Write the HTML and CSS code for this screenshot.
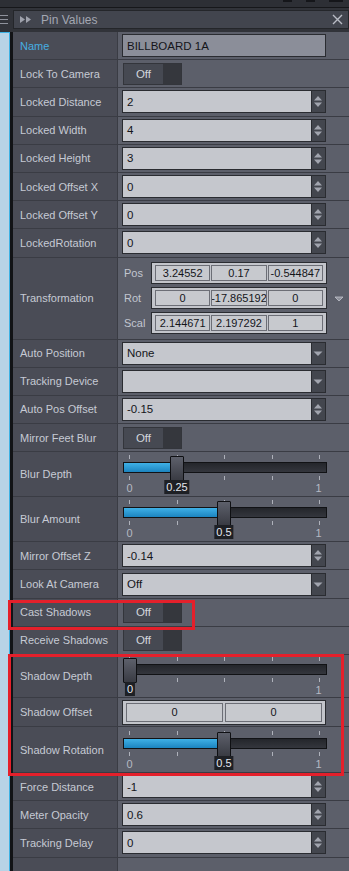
FILE: index.html
```html
<!DOCTYPE html>
<html lang="en">
<head>
  <meta charset="UTF-8">
  <title>Pin Values</title>
  <link rel="stylesheet" href="styles.css">
</head>
<body>
  <div class="topbar">
    <span class="tb-mark"></span>
    <span class="tb-mark"></span>
    <span class="tb-mark wide"></span>
  </div>

  <div class="head">
    <div class="menu-btn">
      <span></span><span></span><span></span>
    </div>
    <div class="title-bar">
      <svg class="dock-icon" width="12" height="7" viewBox="0 0 12 7"><polygon points="0,0 5,3.5 0,7" /><polygon points="6,0 11,3.5 6,7" /></svg>
      <span class="title">Pin Values</span>
      <svg class="close-icon" width="11" height="11" viewBox="0 0 11 11"><path d="M1 1 L10 10 M10 1 L1 10" /></svg>
    </div>
  </div>

  <div class="main">
    <div class="strip"></div>
    <div class="divider"></div>

    <div class="grid">
      <div class="row">
        <div class="label active">Name</div>
        <div class="value"><div class="field name-field">BILLBOARD 1A</div></div>
      </div>

      <div class="row">
        <div class="label">Lock To Camera</div>
        <div class="value"><div class="toggle"><span class="toggle-on">Off</span><span class="toggle-off"></span></div></div>
      </div>

      <div class="row">
        <div class="label">Locked Distance</div>
        <div class="value"><div class="spin"><div class="field">2</div><div class="spin-btn"><svg width="12" height="21" viewBox="0 0 12 21"><polygon points="2,9.5 6,5 10,9.5" /><polygon points="2,11.5 6,16 10,11.5" /></svg></div></div></div>
      </div>

      <div class="row">
        <div class="label">Locked Width</div>
        <div class="value"><div class="spin"><div class="field">4</div><div class="spin-btn"><svg width="12" height="21" viewBox="0 0 12 21"><polygon points="2,9.5 6,5 10,9.5" /><polygon points="2,11.5 6,16 10,11.5" /></svg></div></div></div>
      </div>

      <div class="row">
        <div class="label">Locked Height</div>
        <div class="value"><div class="spin"><div class="field">3</div><div class="spin-btn"><svg width="12" height="21" viewBox="0 0 12 21"><polygon points="2,9.5 6,5 10,9.5" /><polygon points="2,11.5 6,16 10,11.5" /></svg></div></div></div>
      </div>

      <div class="row">
        <div class="label">Locked Offset X</div>
        <div class="value"><div class="spin"><div class="field">0</div><div class="spin-btn"><svg width="12" height="21" viewBox="0 0 12 21"><polygon points="2,9.5 6,5 10,9.5" /><polygon points="2,11.5 6,16 10,11.5" /></svg></div></div></div>
      </div>

      <div class="row">
        <div class="label">Locked Offset Y</div>
        <div class="value"><div class="spin"><div class="field">0</div><div class="spin-btn"><svg width="12" height="21" viewBox="0 0 12 21"><polygon points="2,9.5 6,5 10,9.5" /><polygon points="2,11.5 6,16 10,11.5" /></svg></div></div></div>
      </div>

      <div class="row">
        <div class="label">LockedRotation</div>
        <div class="value"><div class="spin"><div class="field">0</div><div class="spin-btn"><svg width="12" height="21" viewBox="0 0 12 21"><polygon points="2,9.5 6,5 10,9.5" /><polygon points="2,11.5 6,16 10,11.5" /></svg></div></div></div>
      </div>

      <div class="row row-transform">
        <div class="label">Transformation</div>
        <div class="value transform">
          <div class="vec-list">
            <div class="vec-row">
              <span class="vec-name">Pos</span>
              <div class="vec"><span class="cell">3.24552</span><span class="cell">0.17</span><span class="cell">-0.544847</span></div>
            </div>
            <div class="vec-row">
              <span class="vec-name">Rot</span>
              <div class="vec"><span class="cell">0</span><span class="cell">-17.865192</span><span class="cell">0</span></div>
            </div>
            <div class="vec-row">
              <span class="vec-name">Scal</span>
              <div class="vec"><span class="cell">2.144671</span><span class="cell">2.197292</span><span class="cell">1</span></div>
            </div>
          </div>
          <svg class="expand" width="10" height="6" viewBox="0 0 10 6"><polygon points="1,1 9,1 5,5" /></svg>
        </div>
      </div>

      <div class="row">
        <div class="label">Auto Position</div>
        <div class="value"><div class="spin"><div class="field">None</div><div class="spin-btn"><svg width="12" height="21" viewBox="0 0 12 21"><polygon points="1.5,8.5 10.5,8.5 6,13" /></svg></div></div></div>
      </div>

      <div class="row">
        <div class="label">Tracking Device</div>
        <div class="value"><div class="spin"><div class="field"></div><div class="spin-btn"><svg width="12" height="21" viewBox="0 0 12 21"><polygon points="1.5,8.5 10.5,8.5 6,13" /></svg></div></div></div>
      </div>

      <div class="row">
        <div class="label">Auto Pos Offset</div>
        <div class="value"><div class="spin"><div class="field">-0.15</div><div class="spin-btn"><svg width="12" height="21" viewBox="0 0 12 21"><polygon points="2,9.5 6,5 10,9.5" /><polygon points="2,11.5 6,16 10,11.5" /></svg></div></div></div>
      </div>

      <div class="row">
        <div class="label">Mirror Feet Blur</div>
        <div class="value"><div class="toggle"><span class="toggle-on">Off</span><span class="toggle-off"></span></div></div>
      </div>

      <div class="row row-slider">
        <div class="label">Blur Depth</div>
        <div class="value">
          <div class="slider">
            <div class="ticks"><i></i><i></i><i></i><i></i><i></i></div>
            <div class="track">
              <div class="fill" style="width: 53px"></div>
              <div class="thumb" style="left: 46px"></div>
            </div>
            <div class="ticks"><i></i><i></i><i></i><i></i><i></i></div>
            <div class="scale"><span class="min">0</span><span class="max">1</span><span class="current" style="left: 54px">0.25</span></div>
          </div>
        </div>
      </div>

      <div class="row row-slider">
        <div class="label">Blur Amount</div>
        <div class="value">
          <div class="slider">
            <div class="ticks"><i></i><i></i><i></i><i></i><i></i></div>
            <div class="track">
              <div class="fill" style="width: 100px"></div>
              <div class="thumb" style="left: 93px"></div>
            </div>
            <div class="ticks"><i></i><i></i><i></i><i></i><i></i></div>
            <div class="scale"><span class="min">0</span><span class="max">1</span><span class="current" style="left: 101px">0.5</span></div>
          </div>
        </div>
      </div>

      <div class="row">
        <div class="label">Mirror Offset Z</div>
        <div class="value"><div class="spin"><div class="field">-0.14</div><div class="spin-btn"><svg width="12" height="21" viewBox="0 0 12 21"><polygon points="2,9.5 6,5 10,9.5" /><polygon points="2,11.5 6,16 10,11.5" /></svg></div></div></div>
      </div>

      <div class="row">
        <div class="label">Look At Camera</div>
        <div class="value"><div class="spin"><div class="field">Off</div><div class="spin-btn"><svg width="12" height="21" viewBox="0 0 12 21"><polygon points="1.5,8.5 10.5,8.5 6,13" /></svg></div></div></div>
      </div>

      <div class="row">
        <div class="label">Cast Shadows</div>
        <div class="value"><div class="toggle"><span class="toggle-on">Off</span><span class="toggle-off"></span></div></div>
      </div>

      <div class="row">
        <div class="label">Receive Shadows</div>
        <div class="value"><div class="toggle"><span class="toggle-on">Off</span><span class="toggle-off"></span></div></div>
      </div>

      <div class="row row-slider short">
        <div class="label">Shadow Depth</div>
        <div class="value">
          <div class="slider">
            <div class="ticks"><i></i><i></i><i></i><i></i><i></i></div>
            <div class="track">
              <div class="fill" style="width: 0px"></div>
              <div class="thumb" style="left: -1px"></div>
            </div>
            <div class="ticks"><i></i><i></i><i></i><i></i><i></i></div>
            <div class="scale"><span class="min">0</span><span class="max">1</span><span class="current" style="left: 7px">0</span></div>
          </div>
        </div>
      </div>

      <div class="row row-vec2">
        <div class="label">Shadow Offset</div>
        <div class="value">
          <div class="vec vec2"><span class="cell">0</span><span class="cell">0</span></div>
        </div>
      </div>

      <div class="row row-slider tall">
        <div class="label">Shadow Rotation</div>
        <div class="value">
          <div class="slider">
            <div class="ticks"><i></i><i></i><i></i><i></i><i></i></div>
            <div class="track">
              <div class="fill" style="width: 100px"></div>
              <div class="thumb" style="left: 93px"></div>
            </div>
            <div class="ticks"><i></i><i></i><i></i><i></i><i></i></div>
            <div class="scale"><span class="min">0</span><span class="max">1</span><span class="current" style="left: 101px">0.5</span></div>
          </div>
        </div>
      </div>

      <div class="row">
        <div class="label">Force Distance</div>
        <div class="value"><div class="spin"><div class="field">-1</div><div class="spin-btn"><svg width="12" height="21" viewBox="0 0 12 21"><polygon points="2,9.5 6,5 10,9.5" /><polygon points="2,11.5 6,16 10,11.5" /></svg></div></div></div>
      </div>

      <div class="row">
        <div class="label">Meter Opacity</div>
        <div class="value"><div class="spin"><div class="field">0.6</div><div class="spin-btn"><svg width="12" height="21" viewBox="0 0 12 21"><polygon points="2,9.5 6,5 10,9.5" /><polygon points="2,11.5 6,16 10,11.5" /></svg></div></div></div>
      </div>

      <div class="row">
        <div class="label">Tracking Delay</div>
        <div class="value"><div class="spin"><div class="field">0</div><div class="spin-btn"><svg width="12" height="21" viewBox="0 0 12 21"><polygon points="2,9.5 6,5 10,9.5" /><polygon points="2,11.5 6,16 10,11.5" /></svg></div></div></div>
      </div>

      <div class="row row-empty">
        <div class="label"></div>
        <div class="value"></div>
      </div>
    </div>

    <!-- highlight marks -->
    <div class="mark mark-cast"></div>
    <div class="mark mark-shadow"></div>
  </div>
</body>
</html>
```

FILE: styles.css
```css
* {
  box-sizing: border-box;
}

body {
  margin: 0;
  width: 349px;
  height: 871px;
  overflow: hidden;
  background: #303238;
  font-family: "Liberation Sans", Arial, sans-serif;
  font-size: 11px;
  color: #c6cad4;
}

/* top strip */
.topbar {
  height: 8px;
  background: #2d2f35;
  border-bottom: 1px solid #16171a;
  display: flex;
  justify-content: flex-end;
  gap: 14px;
  padding-right: 6px;
}

.tb-mark {
  width: 9px;
  height: 2px;
  background: #15161a;
}

.tb-mark.wide {
  width: 14px;
}

.head {
  display: flex;
  height: 24px;
  padding: 2px 0 3px;
  background: #313339;
}

.menu-btn {
  width: 10px;
  display: flex;
  flex-direction: column;
  justify-content: center;
  gap: 3px;
  padding-right: 2px;
}

.menu-btn span {
  height: 1px;
  background: #8f929c;
}

.title-bar {
  flex: 1;
  margin-left: 3px;
  display: flex;
  align-items: center;
  background: #42454e;
  border: 1px solid #24262a;
  padding: 0 5px 0 6px;
}

.dock-icon {
  fill: #9fa2ac;
}

.title {
  flex: 1;
  margin-left: 9px;
  font-size: 12px;
  color: #a3a7b2;
}

.close-icon {
  stroke: #b9bcc5;
  stroke-width: 1.4;
  fill: none;
}

/* property grid */
.main {
  position: relative;
  display: flex;
  height: 839px;
}

.strip {
  width: 10px;
  background: #b8d3e6;
  border-top: 1px solid #3db2e4;
  border-right: 1px solid #3db2e4;
}

.divider {
  width: 3px;
  background: #121316;
}

.grid {
  flex: 1;
  display: flex;
  flex-direction: column;
}

.row {
  display: flex;
  height: 28.2px;
  flex-shrink: 0;
  border-bottom: 1px solid #3a3c44;
}

.row-transform { height: 82px; }
.row-slider { height: 45px; }
.row-slider.short { height: 43px; }
.row-slider.tall { height: 46px; }
.row-vec2 { height: 29px; }

.row-empty {
  flex: 1;
  border-bottom: 0;
}

.label {
  width: 105px;
  flex-shrink: 0;
  display: flex;
  align-items: center;
  padding-left: 7px;
  background: #4a4c56;
  border-right: 1px solid #3a3c44;
  white-space: nowrap;
}

.label.active {
  color: #46afe2;
}

.value {
  flex: 1;
  display: flex;
  align-items: center;
  padding-left: 4px;
  background: #5c5f6a;
}

.field {
  height: 23px;
  display: flex;
  align-items: center;
  padding-left: 4px;
  background: #c5c7cd;
  border: 1px solid #2a2c31;
  color: #14151a;
  font-size: 11.5px;
}

.name-field {
  width: 204px;
  background: #8b8e99;
}

.spin {
  display: flex;
  width: 204px;
}

.spin .field {
  flex: 1;
}

.spin-btn {
  width: 14px;
  height: 23px;
  background: #43464e;
  border: 1px solid #2a2c31;
  border-left: 0;
  fill: #a1a4ae;
}

/* on/off switch */
.toggle {
  display: flex;
  width: 59px;
  height: 22px;
  border: 1px solid #33353b;
  margin-left: 1px;
}

.toggle-on {
  width: 39px;
  display: flex;
  align-items: center;
  justify-content: center;
  background: #464952;
  color: #d2d5dc;
  font-size: 11.5px;
}

.toggle-off {
  flex: 1;
  background: #35373d;
}

/* vector fields */
.transform {
  padding-left: 6px;
}

.vec-list {
  display: flex;
  flex-direction: column;
  gap: 3px;
}

.vec-row {
  display: flex;
  align-items: center;
}

.vec-name {
  width: 27px;
  color: #c2c6d0;
}

.vec {
  display: flex;
  gap: 1px;
  width: 176px;
  height: 22px;
  padding: 2px 3px;
  background: #c3c5cb;
  border: 1px solid #2a2c31;
}

.cell {
  flex: 1;
  min-width: 0;
  display: flex;
  align-items: center;
  justify-content: center;
  padding: 0 1px;
  overflow: hidden;
  white-space: nowrap;
  border: 1px solid #6c6e76;
  background: #c7c9ce;
  color: #14151a;
}

.vec2 {
  width: 204px;
  height: 25px;
  gap: 2px;
}

.expand {
  margin-left: 7px;
  margin-top: 2px;
  fill: #8f929c;
  stroke: #c0c3cb;
  stroke-width: 0.8;
}

/* sliders */
.row-slider .value {
  align-items: flex-start;
}

.slider {
  width: 204px;
  margin-left: 1px;
  padding-top: 3px;
}

.short .slider {
  padding-top: 2px;
}

.tall .slider {
  padding-top: 4px;
}

.ticks {
  display: flex;
  justify-content: space-between;
  height: 4px;
  padding: 0 7px 0 6px;
}

.ticks i {
  width: 1px;
  background: #aeb1ba;
}

.track {
  position: relative;
  height: 11px;
  margin: 3px 0;
  border: 1px solid #111215;
  background: linear-gradient(#24262b, #34363d);
}

.fill {
  height: 100%;
  background: linear-gradient(#3fb0e6, #1c84bf);
}

.thumb {
  position: absolute;
  top: -7px;
  width: 14px;
  height: 25px;
  border: 1px solid #0f1013;
  border-radius: 1px;
  background: linear-gradient(#5d606b, #393b43);
}

.scale {
  position: relative;
  height: 14px;
  color: #b5b9c3;
}

.scale span {
  position: absolute;
  top: 1px;
  transform: translateX(-50%);
}

.scale .min {
  left: 6.5px;
  top: 2px;
}

.scale .max {
  left: 195.5px;
  top: 2px;
}

.scale .current {
  top: 0;
  padding: 1px 2px;
  background: #1e2025;
  color: #e4e7ee;
}

/* red highlight marks */
.mark {
  position: absolute;
  border: 3px solid #e4202b;
}

.mark-cast {
  left: 8px;
  top: 568px;
  width: 187px;
  height: 30px;
}

.mark-shadow {
  left: 8px;
  top: 622px;
  width: 336px;
  height: 122px;
}
```
